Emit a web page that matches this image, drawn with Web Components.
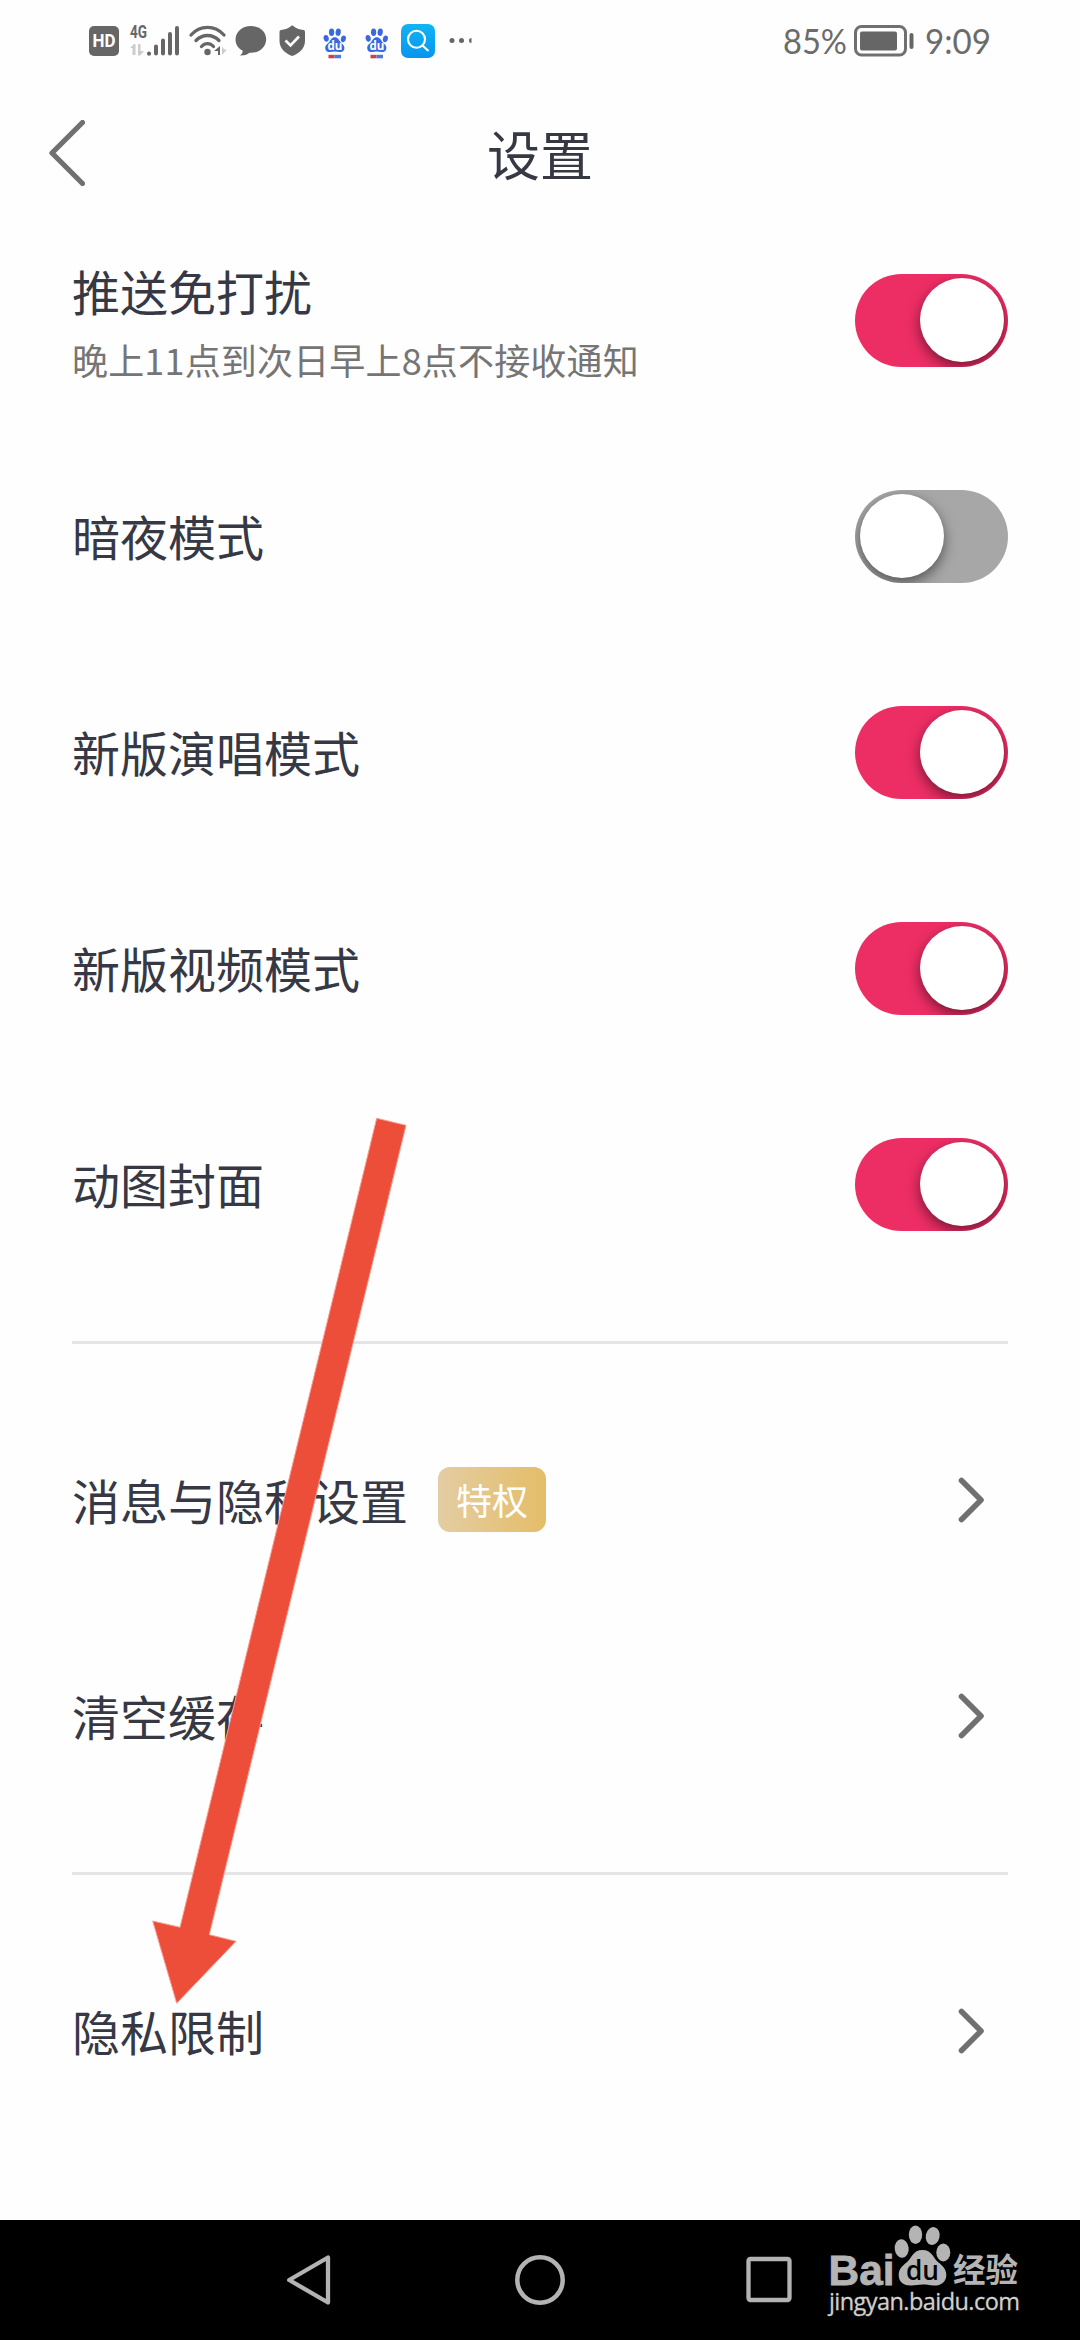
<!DOCTYPE html>
<html lang="zh-CN">
<head>
<meta charset="utf-8">
<title>设置</title>
<style>
html,body{margin:0;padding:0}
body{width:1080px;height:2340px;overflow:hidden;background:#fefefe;font-family:"Noto Sans CJK SC",sans-serif;color:#363844}
</style>
</head>
<body>
<settings-app></settings-app>
<script>
const define=(name,html,init)=>customElements.define(name,class extends HTMLElement{
  constructor(){super();const t=document.createElement('template');t.innerHTML=html;
    this.attachShadow({mode:'open'}).appendChild(t.content.cloneNode(true));}
  connectedCallback(){if(init)init(this,this.shadowRoot);}
});

define('paw-icon',`<style>:host{display:block;width:24px;height:32px;flex:none}svg{display:block}</style>
<svg width="24" height="32" viewBox="0 0 24 32"><g fill="#3a68e0">
<ellipse cx="3.2" cy="10.3" rx="2.6" ry="3.4" transform="rotate(-12 3.2 10.3)"/><ellipse cx="8.6" cy="4.2" rx="2.6" ry="3.7"/><ellipse cx="15.2" cy="4.2" rx="2.6" ry="3.7" transform="rotate(8 15.2 4.2)"/><ellipse cx="20.4" cy="10.8" rx="2.5" ry="3.4" transform="rotate(12 20.4 10.8)"/>
<path d="M11.8 9.2c3 0 4 2.600 5.600 4.700 1.500 1.900 4 3 4 6 0 3-2.400 4.300-5 4.200-1.600-.1-3-.5-4.600-.5s-3 .4-4.600.5c-2.600.1-5-1.200-5-4.200 0-3 2.500-4.100 4-6 1.600-2.100 2.600-4.700 5.600-4.700z"/></g>
<text x="11.8" y="22" text-anchor="middle" font-family="Open Sans,sans-serif" font-weight="700" font-size="11.500" fill="#fff">du</text>
<path d="M5.500 26.800h6v3.500h-6z" fill="#cc4046"/><path d="M11.500 26.800h6.500v3.500h-6.500z" fill="#4f78dc"/></svg>`);

define('status-bar',`<style>:host{display:flex;height:82px;box-sizing:border-box;padding:0 88px 0 89px;align-items:center;color:#666}
.l,.r{display:flex;align-items:center}.r{margin-left:auto}svg{display:block;flex:none;overflow:visible}</style>
<div class="l">
<svg width="30" height="34" viewBox="0 0 30 34"><rect y="2" width="30" height="30" rx="5" fill="#666"/><text x="15" y="23" text-anchor="middle" textLength="23" lengthAdjust="spacingAndGlyphs" font-family="Roboto,sans-serif" font-weight="700" font-size="18.500" fill="#fff">HD</text></svg>
<svg style="margin-left:11px" width="50" height="34" viewBox="0 0 50 34"><text x="0" y="13.800" textLength="17" lengthAdjust="spacingAndGlyphs" font-family="Roboto,sans-serif" font-weight="700" font-size="18.500" fill="#666">4G</text>
<g fill="#ccc"><path d="M0 24l4-4h1.500v11H2.500v-7zM8 20h2.500v7H14l-4 4.500H8z"/></g>
<g stroke="#666" stroke-width="4" stroke-linecap="round"><path d="M19 29.400v.3M26 22.500v7M33 16.500v13M40 10v19.500M47 4v25.500"/></g></svg>
<svg style="margin-left:9px" width="39" height="34" viewBox="0 0 39 34"><g fill="none" stroke="#666" stroke-width="3.300" stroke-linecap="round"><path d="M2 11C11 .800 26 .800 35 11M7 16.500C13.500 9.800 23.500 9.800 30 16.500M12.500 22.500C16 18.700 21 18.700 24.500 22.500"/></g><circle cx="18.500" cy="28" r="3.200" fill="#666"/><path d="M25 27l6-5v9h-2v-4z" fill="#666"/><path d="M33 22v9l5-5.500h-3z" fill="#ccc"/></svg>
<svg style="margin-left:7px" width="32" height="34" viewBox="0 0 32 34"><path d="M16 2C25 2 31.200 8 31.200 15.200S25 28.800 16 28.800L14.500 28.700C12 31 8.700 31.500 5 31.400C7 29.800 8 28.500 7.500 26.500C3.500 24.500.500 20.500.500 15.400.500 8 7 2 16 2z" fill="#666"/></svg>
<svg style="margin-left:12px" width="27" height="34" viewBox="0 0 27 34"><path d="M13.200 1.200C17 4.500 20.500 5.500 24.500 6Q26 6.200 26 8v9c0 7-5.500 12.500-12.800 15C6 29.500.500 24 .500 17V8Q.500 6.200 2 6C6 5.500 9.500 4.500 13.200 1.200z" fill="#666"/><path d="M6.500 16.500l5 5 8.500-9" fill="none" stroke="#fff" stroke-width="2.600"/></svg>
<paw-icon style="margin-left:17px;margin-top:6px"></paw-icon>
<paw-icon style="margin-left:18px;margin-top:6px"></paw-icon>
<svg style="margin-left:12px" width="34" height="34" viewBox="0 0 34 34"><defs><linearGradient id="g" x2="0" y2="1"><stop stop-color="#10b4f4"/><stop offset="1" stop-color="#0795ef"/></linearGradient></defs><rect width="34" height="34" rx="7" fill="url(#g)"/><g fill="none" stroke="#fff" stroke-width="2.100"><circle cx="15.500" cy="15.300" r="8.500"/><path d="M21.500 21.500l6 5.500"/></g></svg>
<svg style="margin-left:13px" width="24" height="34" viewBox="0 0 23 34"><g fill="#666"><circle cx="3.500" cy="16.500" r="2.500"/><circle cx="13" cy="16.500" r="2.500"/><path d="M23 14a2.500 2.500 0 0 0 0 5z"/></g></svg>
</div>
<div class="r">
<svg width="65" height="34" viewBox="0 0 65 34"><text x="0" y="30" textLength="64" lengthAdjust="spacingAndGlyphs" font-family="Lato,sans-serif" font-size="34.500" fill="#6b6b6b">85%</text></svg>
<svg style="margin:0 11px 0 6px" width="60" height="34" viewBox="0 0 60 34"><rect x="1.500" y="2.500" width="50" height="28.500" rx="6" fill="none" stroke="#707070" stroke-width="3"/><rect x="6" y="7.500" width="37" height="19" rx="2" fill="#666"/><rect x="55.500" y="9" width="4" height="16" rx="2" fill="#666"/></svg>
<svg width="67" height="34" viewBox="0 0 67 34"><text x="0" y="30" textLength="66" lengthAdjust="spacingAndGlyphs" font-family="Lato,sans-serif" font-size="34.500" fill="#6b6b6b">9:09</text></svg></div>`);

define('title-bar',`<style>:host{display:grid;grid-template-columns:1fr auto 1fr;align-items:center;height:130px;padding:0 49px}svg{display:block}h1{margin:12px 0 0;font-size:53px;line-height:70px;font-weight:400}</style>
<svg width="36" height="66" viewBox="0 0 36 66" style="margin-top:11px"><path d="M33.500 2.500L3 33l30.500 30.500" fill="none" stroke="#707070" stroke-width="5.300" stroke-linecap="round" stroke-linejoin="round"/></svg><h1><slot></slot></h1>`);

define('toggle-switch',`<style>:host{display:block;flex:none;width:153px;height:93px;border-radius:47px;background:#a7a7a7;overflow:hidden;box-sizing:border-box;padding:4.500px}
:host([on]){background:#ed2e65}i{display:block;width:84px;height:84px;border-radius:50%;background:#fff;box-shadow:0 5px 13px rgba(0,0,0,.5)}:host([on]) i{margin-left:auto}</style><i></i>`);

define('chevron-icon',`<style>:host{display:block;flex:none;margin-right:23px}svg{display:block}</style><svg width="27" height="46" viewBox="0 0 27 46"><path d="M3.500 3.500L23 23 3.500 42.500" fill="none" stroke="#707070" stroke-width="5.600" stroke-linecap="round" stroke-linejoin="round"/></svg>`);

define('vip-badge',`<style>:host{display:flex;align-items:center;justify-content:center;width:108px;height:65px;border-radius:12px;background:linear-gradient(90deg,#e3cda3,#e5bd68);color:#fff;font-size:36px;line-height:50px;margin:-2px 0 0 30px}</style><span><slot></slot></span>`);

define('setting-row',`<style>:host{display:flex;align-items:center;height:216px}
.c{flex:1;display:flex;flex-direction:column;gap:13px}:host([note]) .c{padding-top:5px}.m{display:flex;align-items:center;font-size:48px;line-height:62px}.m>span{margin-top:-3px}
.s{font-size:36px;line-height:50px;color:#757575;letter-spacing:.17px}.s:empty{display:none}</style>
<div class="c"><div class="m"><span><slot></slot></span><slot name="badge"></slot></div><div class="s"></div></div><slot name="end"></slot>`,
(h,r)=>{if(h.hasAttribute('note'))r.querySelector('.s').textContent=h.getAttribute('note')});

define('nav-bar',`<style>:host{display:flex;height:120px;background:#000;padding:0 54px 0 285px;box-sizing:border-box}svg{display:block;flex:none;margin-top:33px}.w{margin-left:33px}.w svg{margin:0}</style>
<svg width="48" height="54" viewBox="0 0 48 54"><path d="M43 4.500v45L4.200 27z" fill="none" stroke="#b3b3b3" stroke-width="4.300" stroke-linejoin="round"/></svg>
<svg style="margin-left:180px" width="54" height="54" viewBox="0 0 54 54"><circle cx="27" cy="27" r="22.700" fill="none" stroke="#b3b3b3" stroke-width="4.500"/></svg>
<svg style="margin-left:177px" width="50" height="54" viewBox="0 0 50 54"><rect x="4.500" y="6" width="41" height="41" rx="2" fill="none" stroke="#b3b3b3" stroke-width="4.300"/></svg>
<div class="w"><svg width="202" height="120" viewBox="0 0 202 120"><g fill="#b4b4b4">
<text x="1.500" y="64.500" textLength="66" lengthAdjust="spacingAndGlyphs" font-family="Liberation Sans,sans-serif" font-weight="700" font-size="43" stroke="#b4b4b4" stroke-width=".8">Bai</text>
<ellipse cx="74.700" cy="28.500" rx="7" ry="9.200" transform="rotate(-6 74.700 28.500)"/><ellipse cx="88.500" cy="14.700" rx="6.700" ry="9.200"/><ellipse cx="105.700" cy="16" rx="6.900" ry="9" transform="rotate(12 105.700 16)"/><ellipse cx="116.300" cy="32.500" rx="7" ry="9"/>
<path d="M95.300 30C105 30 106 38 111.500 42.500C116 46 119.300 49.500 119.300 55C119.300 62.500 113 66 106.500 65.500C102 65.100 99.500 64.500 95.500 64.500S88.500 65.300 84.500 65.500C77.500 65.900 71.700 62.500 71.700 55C71.700 49.500 75 46 79.500 42.500C85 38 86 30 95.300 30z"/>
<text x="126" y="61.500" textLength="65" lengthAdjust="spacingAndGlyphs" font-family="Noto Sans CJK SC,sans-serif" font-weight="700" font-size="33">经验</text></g>
<text x="95.500" y="59.800" text-anchor="middle" textLength="33" lengthAdjust="spacingAndGlyphs" font-family="Open Sans,sans-serif" font-weight="600" font-size="27" fill="#000">du</text>
<text x="2" y="90" textLength="191" font-family="Open Sans,sans-serif" font-size="23.500" fill="#d0d0d0" stroke="#d0d0d0" stroke-width=".3">jingyan.baidu.com</text></svg></div>`);

define('pointer-arrow',`<style>:host{position:absolute;left:150px;top:1115px;pointer-events:none}svg{display:block}</style><svg width="260" height="892" viewBox="150 1115 260 892"><path d="M376.700 1118.300L406 1125.300 209.300 1934.700 236 1941.300 176.700 2003.300 152.700 1921 180 1927.300z" fill="#ed4e3a" stroke="#f5a093" stroke-width="1"/></svg>`);

define('settings-app',`<style>:host{display:flex;flex-direction:column;width:1080px;height:2340px;position:relative}
main{padding:0 72px;flex:1}hr{border:0;margin:48px 0;height:3px;background:#e5e5e5}hr.first{margin-top:49px}</style>
<status-bar></status-bar><title-bar>设置</title-bar>
<main>
<setting-row note="晚上11点到次日早上8点不接收通知">推送免打扰<toggle-switch slot="end" on></toggle-switch></setting-row>
<setting-row>暗夜模式<toggle-switch slot="end"></toggle-switch></setting-row>
<setting-row>新版演唱模式<toggle-switch slot="end" on></toggle-switch></setting-row>
<setting-row>新版视频模式<toggle-switch slot="end" on></toggle-switch></setting-row>
<setting-row>动图封面<toggle-switch slot="end" on></toggle-switch></setting-row>
<hr class="first">
<setting-row>消息与隐私设置<vip-badge slot="badge">特权</vip-badge><chevron-icon slot="end"></chevron-icon></setting-row>
<setting-row>清空缓存<chevron-icon slot="end"></chevron-icon></setting-row>
<hr>
<setting-row>隐私限制<chevron-icon slot="end"></chevron-icon></setting-row>
</main>
<nav-bar></nav-bar><pointer-arrow></pointer-arrow>`);
</script>
</body>
</html>
